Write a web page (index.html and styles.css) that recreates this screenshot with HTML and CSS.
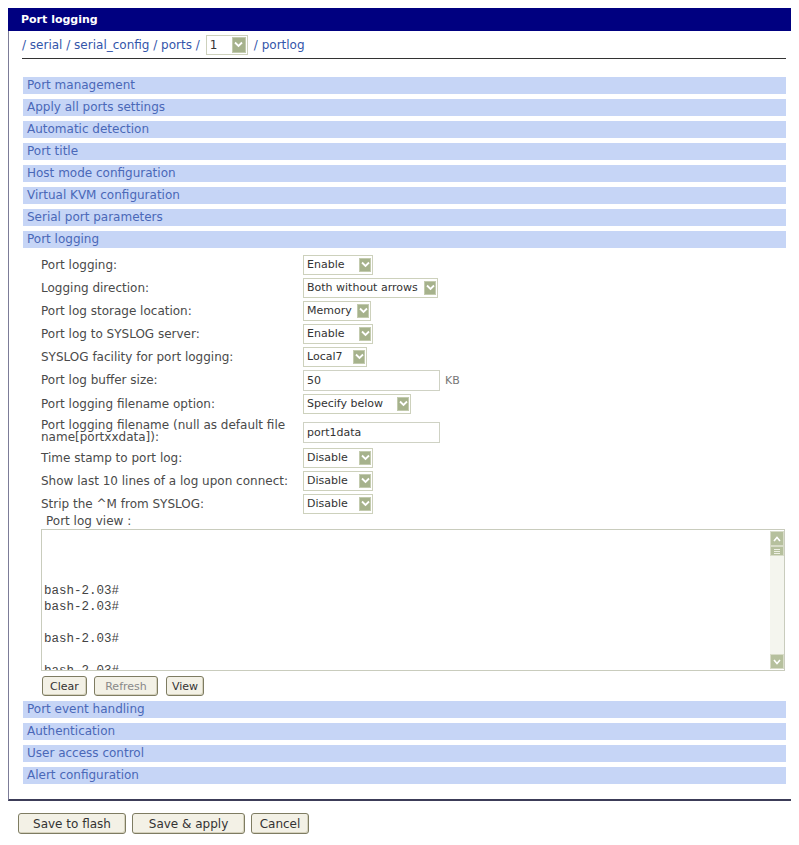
FILE: index.html
```html
<!DOCTYPE html>
<html lang="en">
<head>
    <meta charset="UTF-8">
    <meta name="viewport" content="width=device-width, initial-scale=1.0">
    <title>Port logging</title>
    <link rel="stylesheet" href="styles.css">
</head>
<body>
    <div class="panel">
        <div class="panel-title">Port logging</div>
        <div class="panel-body">
            <div class="crumbs">
                <span>/ serial / serial_config / ports /</span>
                <span class="sel sel-crumb"><span class="sel-val">1</span><span class="sel-btn"><svg width="9" height="7" viewBox="0 0 9 7"><path d="M1 1.5 L4.5 5 L8 1.5" fill="none" stroke="#fff" stroke-width="1.8"/></svg></span></span>
                <span>/ portlog</span>
            </div>

            <div class="sections">
                <div class="sec">Port management</div>
                <div class="sec">Apply all ports settings</div>
                <div class="sec">Automatic detection</div>
                <div class="sec">Port title</div>
                <div class="sec">Host mode configuration</div>
                <div class="sec">Virtual KVM configuration</div>
                <div class="sec">Serial port parameters</div>
                <div class="sec">Port logging</div>

                <div class="form">
                    <div class="row">
                        <span class="lbl">Port logging:</span>
                        <span class="sel sel-onoff"><span class="sel-val">Enable</span><span class="sel-btn"><svg width="9" height="7" viewBox="0 0 9 7"><path d="M1 1.5 L4.5 5 L8 1.5" fill="none" stroke="#fff" stroke-width="1.8"/></svg></span></span>
                    </div>
                    <div class="row">
                        <span class="lbl">Logging direction:</span>
                        <span class="sel sel-dir"><span class="sel-val">Both without arrows</span><span class="sel-btn"><svg width="9" height="7" viewBox="0 0 9 7"><path d="M1 1.5 L4.5 5 L8 1.5" fill="none" stroke="#fff" stroke-width="1.8"/></svg></span></span>
                    </div>
                    <div class="row">
                        <span class="lbl">Port log storage location:</span>
                        <span class="sel sel-mem"><span class="sel-val">Memory</span><span class="sel-btn"><svg width="9" height="7" viewBox="0 0 9 7"><path d="M1 1.5 L4.5 5 L8 1.5" fill="none" stroke="#fff" stroke-width="1.8"/></svg></span></span>
                    </div>
                    <div class="row">
                        <span class="lbl">Port log to SYSLOG server:</span>
                        <span class="sel sel-onoff"><span class="sel-val">Enable</span><span class="sel-btn"><svg width="9" height="7" viewBox="0 0 9 7"><path d="M1 1.5 L4.5 5 L8 1.5" fill="none" stroke="#fff" stroke-width="1.8"/></svg></span></span>
                    </div>
                    <div class="row">
                        <span class="lbl">SYSLOG facility for port logging:</span>
                        <span class="sel sel-fac"><span class="sel-val">Local7</span><span class="sel-btn"><svg width="9" height="7" viewBox="0 0 9 7"><path d="M1 1.5 L4.5 5 L8 1.5" fill="none" stroke="#fff" stroke-width="1.8"/></svg></span></span>
                    </div>
                    <div class="row row-input">
                        <span class="lbl">Port log buffer size:</span>
                        <input class="txt" type="text" value="50">
                        <span class="unit">KB</span>
                    </div>
                    <div class="row">
                        <span class="lbl">Port logging filename option:</span>
                        <span class="sel sel-name"><span class="sel-val">Specify below</span><span class="sel-btn"><svg width="9" height="7" viewBox="0 0 9 7"><path d="M1 1.5 L4.5 5 L8 1.5" fill="none" stroke="#fff" stroke-width="1.8"/></svg></span></span>
                    </div>
                    <div class="row row-tall">
                        <span class="lbl lbl-wrap">Port logging filename (null as default file name[portxxdata]):</span>
                        <input class="txt" type="text" value="port1data">
                    </div>
                    <div class="row">
                        <span class="lbl">Time stamp to port log:</span>
                        <span class="sel sel-onoff"><span class="sel-val">Disable</span><span class="sel-btn"><svg width="9" height="7" viewBox="0 0 9 7"><path d="M1 1.5 L4.5 5 L8 1.5" fill="none" stroke="#fff" stroke-width="1.8"/></svg></span></span>
                    </div>
                    <div class="row">
                        <span class="lbl">Show last 10 lines of a log upon connect:</span>
                        <span class="sel sel-onoff"><span class="sel-val">Disable</span><span class="sel-btn"><svg width="9" height="7" viewBox="0 0 9 7"><path d="M1 1.5 L4.5 5 L8 1.5" fill="none" stroke="#fff" stroke-width="1.8"/></svg></span></span>
                    </div>
                    <div class="row">
                        <span class="lbl">Strip the ^M from SYSLOG:</span>
                        <span class="sel sel-onoff"><span class="sel-val">Disable</span><span class="sel-btn"><svg width="9" height="7" viewBox="0 0 9 7"><path d="M1 1.5 L4.5 5 L8 1.5" fill="none" stroke="#fff" stroke-width="1.8"/></svg></span></span>
                    </div>

                    <div class="view-lbl">Port log view :</div>
                    <div class="logbox">
                        <textarea class="log" readonly>



bash-2.03#
bash-2.03#

bash-2.03#

bash-2.03#</textarea>
                        <div class="sbar">
                            <div class="sbar-btn"><svg width="8" height="6" viewBox="0 0 8 6"><path d="M1 5 L4 1.5 L7 5" fill="none" stroke="#fff" stroke-width="1.6"/></svg></div>
                            <div class="sbar-thumb"><span></span><span></span><span></span></div>
                            <div class="sbar-track"></div>
                            <div class="sbar-btn"><svg width="8" height="6" viewBox="0 0 8 6"><path d="M1 1 L4 4.5 L7 1" fill="none" stroke="#fff" stroke-width="1.6"/></svg></div>
                        </div>
                    </div>
                    <div class="view-btns">
                        <button class="btn btn-clear">Clear</button>
                        <button class="btn btn-refresh">Refresh</button>
                        <button class="btn btn-view">View</button>
                    </div>
                </div>

                <div class="sec">Port event handling</div>
                <div class="sec">Authentication</div>
                <div class="sec">User access control</div>
                <div class="sec">Alert configuration</div>
            </div>
        </div>
    </div>

    <div class="actions">
        <button class="btn btn-flash">Save to flash</button>
        <button class="btn btn-apply">Save &amp; apply</button>
        <button class="btn btn-cancel">Cancel</button>
    </div>
</body>
</html>
```

FILE: styles.css
```css
*
{
    box-sizing: border-box;
}
body
{
    margin: 8px;
    background: #fff;
    font-family: "DejaVu Sans", Verdana, sans-serif;
    font-size: 12px;
    color: #4a4a4a;
}
.panel
{
    width: 789px;
    border: 1px solid #7c7c98;
    border-right: 2px solid #3c3c58;
    border-bottom: 2px solid #3c3c58;
    border-top: none;
}
.panel-title
{
    background: #000080;
    color: #fff;
    font-weight: bold;
    font-size: 11px;
    height: 23px;
    line-height: 23px;
    padding-left: 13px;
    margin-left: -1px;
    margin-right: -2px;
}
.panel-body
{
    padding: 0 9px 15px 14px;
}
.crumbs
{
    display: flex;
    align-items: center;
    gap: 4px;
    height: 28px;
    margin-left: -1px;
    border-bottom: 1px solid #333;
    font-size: 12px;
    color: #3355aa;
}
.sections
{
    margin-top: 18px;
}
.sec
{
    background: #c6d5f6;
    color: #4a68b8;
    font-size: 12px;
    height: 17px;
    line-height: 17px;
    padding-left: 4px;
    margin-bottom: 5px;
}
.sec:last-child
{
    margin-bottom: 0;
}

/* select look-alike */
.sel
{
    display: inline-flex;
    align-items: center;
    height: 20px;
    background: #fff;
    border: 1px solid #cdd1bc;
    padding: 0 1px 0 0;
    font-size: 11px;
    color: #333;
}
.sel-val
{
    flex: 1;
    padding-left: 3px;
    white-space: nowrap;
}
.sel-btn
{
    display: flex;
    align-items: center;
    justify-content: center;
    width: 12px;
    height: 14px;
    background: #a6b28c;
    border: 1px solid #c3cbae;
}
.sel-crumb
{
    width: 42px;
    font-size: 12px;
    margin: 0 2px;
}
.sel-crumb .sel-btn
{
    width: 14px;
    height: 16px;
}
.sel-onoff { width: 70px; }
.sel-dir { width: 135px; }
.sel-mem { width: 68px; }
.sel-fac { width: 64px; }
.sel-name { width: 108px; }

.form
{
    padding: 0 1px 5px 18px;
}
.row
{
    display: flex;
    align-items: center;
    height: 23px;
}
.row-input
{
    height: 24px;
}
.row-tall
{
    height: 31px;
}
.lbl
{
    width: 262px;
    flex: none;
}
.lbl-wrap
{
    line-height: 12px;
    padding-right: 4px;
}
.txt
{
    width: 137px;
    height: 21px;
    border: 1px solid #cfd2c4;
    font-family: inherit;
    font-size: 11px;
    color: #333;
    padding: 0 3px;
}
.row-tall .txt
{
    margin-top: 4px;
}
.unit
{
    margin-left: 5px;
    font-size: 11px;
    color: #777;
}
.view-lbl
{
    height: 14px;
    line-height: 13px;
    padding-left: 5px;
}
.logbox
{
    display: flex;
    height: 142px;
    border: 1px solid #c9ccbd;
    background: #fff;
}
.log
{
    flex: 1;
    border: none;
    resize: none;
    overflow: hidden;
    font-family: "Liberation Mono", "Courier New", monospace;
    font-size: 12.5px;
    line-height: 16px;
    color: #444;
    padding: 5px 2px 0;
    outline: none;
}
.sbar
{
    width: 14px;
    display: flex;
    flex-direction: column;
    padding: 1px 0;
}
.sbar-btn
{
    height: 15px;
    background: #b6c09d;
    border: 1px solid #d8dcc8;
    display: flex;
    align-items: center;
    justify-content: center;
}
.sbar-thumb
{
    height: 10px;
    background: #b6c09d;
    border: 1px solid #d8dcc8;
    display: flex;
    flex-direction: column;
    justify-content: center;
    gap: 1px;
    padding: 0 3px;
}
.sbar-thumb span
{
    height: 1px;
    background: #eef0e4;
}
.sbar-track
{
    flex: 1;
    background: #f4f5ee;
}
.view-btns
{
    display: flex;
    gap: 7px;
    margin-top: 5px;
    margin-left: 1px;
}
.btn
{
    height: 20px;
    background: #f3f1e6;
    border: 1px solid #7e7c62;
    border-radius: 3px;
    box-shadow: inset -1px -1px 0 #d6d2bd;
    font-family: inherit;
    font-size: 11px;
    color: #333;
    padding: 0;
}
.btn-clear { width: 45px; }
.btn-refresh { width: 64px; color: #888; }
.btn-view { width: 38px; margin-left: 1px; }

.actions
{
    display: flex;
    gap: 6px;
    margin: 12px 0 0 10px;
}
.actions .btn
{
    height: 21px;
    font-size: 12px;
}
.btn-flash { width: 108px; }
.btn-apply { width: 113px; }
.btn-cancel { width: 58px; }
```
